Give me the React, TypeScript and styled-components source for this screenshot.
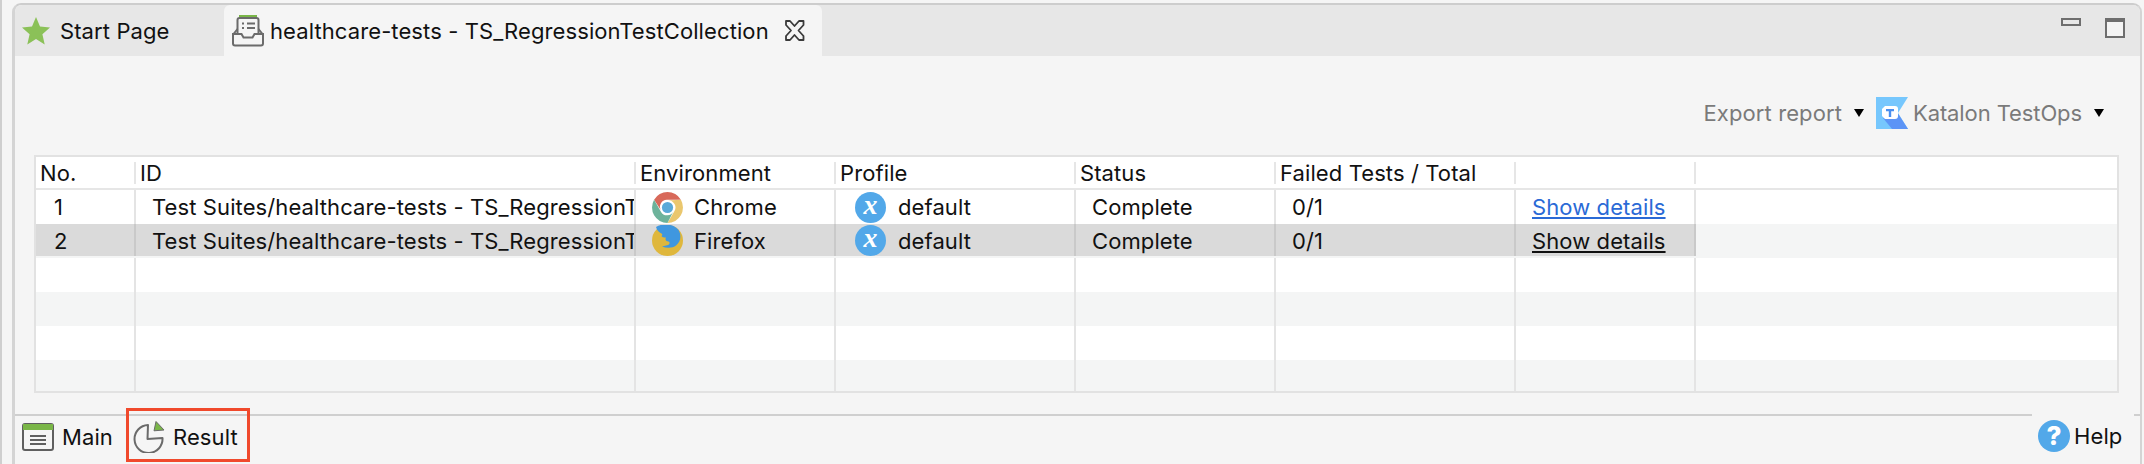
import React from "react";
import styled, { createGlobalStyle } from "styled-components";

const GlobalStyle = createGlobalStyle`
  html, body {
    margin: 0;
    padding: 0;
    background: #f5f5f5;
  }
  body {
    font-family: Inter, "Liberation Sans", sans-serif;
    font-size: 22px;
    letter-spacing: 0.1px;
    color: #111;
  }
`;

const columns = "100px 500px 200px 240px 200px 240px 180px 1fr";

const Page = styled.div`
  width: 2144px;
  height: 464px;
  box-sizing: border-box;
  overflow: hidden;
  padding: 3px 0 0 10px;
  background: #f5f5f5;
  border-left: 2px solid #cfcfcf;
`;

const Frame = styled.div`
  display: flex;
  flex-direction: column;
  height: 461px;
  width: 2130px;
  box-sizing: border-box;
  border-top: 2px solid #cdcdcd;
  border-left: 3px solid #d4d4d4;
  border-right: 2px solid #d4d4d4;
  border-radius: 9px 9px 0 0;
`;

const TabStrip = styled.div`
  display: flex;
  align-items: stretch;
  height: 51px;
  flex: none;
  background: #e7e7e7;
  border-radius: 7px 7px 0 0;
`;

const Tab = styled.div<{ $active?: boolean; $width: number; $pad: number }>`
  display: flex;
  align-items: center;
  width: ${(p) => p.$width}px;
  box-sizing: border-box;
  padding-left: ${(p) => p.$pad}px;
  background: ${(p) => (p.$active ? "#f5f5f5" : "transparent")};
  border-radius: 6px 6px 0 0;
  white-space: nowrap;
`;

const TabLabel = styled.span<{ $gap: number }>`
  margin-left: ${(p) => p.$gap}px;
`;

const CloseIcon = styled.svg`
  margin-left: 15px;
  flex: none;
`;

const WindowButtons = styled.div`
  display: flex;
  align-items: flex-start;
  gap: 24px;
  margin-left: auto;
  padding: 13px 15px 0 0;
`;

const Minimize = styled.div`
  width: 20px;
  height: 8px;
  box-sizing: border-box;
  border: 2px solid #6e6e6e;
`;

const Maximize = styled.div`
  width: 20px;
  height: 20px;
  box-sizing: border-box;
  border: 2px solid #6e6e6e;
  border-top-width: 4px;
  background: #f4f4f4;
`;

const Content = styled.div`
  flex: 1;
  display: flex;
  flex-direction: column;
  min-height: 0;
`;

const Toolbar = styled.div`
  display: flex;
  align-items: center;
  justify-content: flex-end;
  height: 99px;
  flex: none;
  box-sizing: border-box;
  padding: 14px 36px 0 0;
  color: #7a7a7a;
`;

const ToolLabel = styled.span`
  margin-left: 5px;
  letter-spacing: -0.1px;
`;

const Caret = styled.span<{ $gap: number; $after?: number }>`
  width: 0;
  height: 0;
  margin-left: ${(p) => p.$gap}px;
  margin-right: ${(p) => p.$after ?? 0}px;
  border-left: 5px solid transparent;
  border-right: 5px solid transparent;
  border-top: 8px solid #000;
`;

const Table = styled.div`
  margin: 0 21px 0 19px;
  height: 238px;
  flex: none;
  box-sizing: border-box;
  border: 2px solid #e2e2e2;
  background: #fff;
  overflow: hidden;
`;

const HeaderRow = styled.div`
  display: grid;
  grid-template-columns: ${columns};
  height: 31px;
  border-bottom: 2px solid #e6e6e6;
  align-items: center;
  background: #fff;
`;

const HeaderCell = styled.div`
  height: 22px;
  line-height: 22px;
  padding-left: 4px;
  border-right: 2px solid #e6e6e6;
  white-space: nowrap;
  &:last-child {
    border-right: none;
  }
`;

const Row = styled.div<{ $alt?: boolean }>`
  display: grid;
  grid-template-columns: ${columns};
  height: 34px;
  background: ${(p) => (p.$alt ? "#f4f5f5" : "#fff")};
`;

const Cell = styled.div<{ $selected?: boolean; $indent: number; $last?: boolean }>`
  display: flex;
  align-items: center;
  box-sizing: border-box;
  height: ${(p) => (p.$selected ? "32px" : "100%")};
  min-width: 0;
  overflow: hidden;
  white-space: nowrap;
  padding-left: ${(p) => p.$indent}px;
  padding-top: ${(p) => (p.$selected ? "1px" : "0")};
  background: ${(p) => (p.$selected ? "#dadada" : "transparent")};
  border-right: ${(p) =>
    p.$last ? "none" : p.$selected ? "2px solid #c9c9c9" : "2px solid #e4e4e4"};
`;

const RowIcon = styled.span`
  display: inline-flex;
  flex: none;
  margin-right: 11px;
`;

const VariableBadge = styled.span`
  display: inline-flex;
  align-items: center;
  justify-content: center;
  flex: none;
  width: 31px;
  height: 31px;
  margin-right: 12px;
  border-radius: 50%;
  background: #52a8e9;
  color: #fff;
  font-family: "Liberation Serif", serif;
  font-style: italic;
  font-weight: 700;
  font-size: 28px;
  line-height: 1;
  padding-bottom: 5px;
  box-sizing: border-box;
`;

const DetailLink = styled.a<{ $selected?: boolean }>`
  color: ${(p) => (p.$selected ? "#111" : "#2a6ad6")};
  text-decoration: underline;
`;

const BottomBar = styled.div`
  position: relative;
  display: flex;
  align-items: flex-start;
  height: 48px;
  flex: none;
  margin-top: 21px;
  border-top: 2px solid #cfcfcf;
  padding-left: 7px;
`;

const BottomTab = styled.div<{ $gap: number; $width: number }>`
  display: flex;
  align-items: center;
  height: 42px;
  width: ${(p) => p.$width}px;
  gap: ${(p) => p.$gap}px;
`;

/* red annotation drawn over the screenshot */
const Highlight = styled.div`
  position: absolute;
  left: 111px;
  top: -8px;
  width: 124px;
  height: 54px;
  box-sizing: border-box;
  border: 3px solid #f0492c;
`;

const HelpBox = styled.div`
  display: flex;
  align-items: center;
  gap: 4px;
  box-sizing: border-box;
  width: 102px;
  height: 44px;
  margin: -2px 6px 0 auto;
  padding-left: 6px;
  background: #f5f5f5;
`;

const HelpBadge = styled.span`
  display: inline-flex;
  align-items: center;
  justify-content: center;
  width: 32px;
  height: 32px;
  border-radius: 50%;
  background: #52a8e9;
  color: #fff;
  font-weight: 800;
  font-size: 26px;
  line-height: 1;
`;

const StarIcon = () => (
  <svg width="28" height="28" viewBox="0 0 28 28">
    <path d="M14 0l4 9.600 10 .9-7.600 6.700L22.700 27.500 14 22.100 5.300 27.500l2.300-10.300L0 10.500l10-.9z" fill="#8bc158" />
  </svg>
);

const InboxIcon = () => (
  <svg width="32" height="32" viewBox="0 0 32 32" fill="none">
    <rect x="7" y="0" width="18" height="3" fill="#7ab648" />
    <path d="M5.500 18V5q0-2 2-2h17q2 0 2 2v13" stroke="#6b6b6b" strokeWidth="2" fill="#f5f5f5" />
    <path d="M1.500 19l4-5M30.500 19l-4-5" stroke="#6b6b6b" strokeWidth="2" />
    <path d="M1 19h8.500l2 3.500h9l2-3.500H31v9.500a2 2 0 0 1-2 2H3a2 2 0 0 1-2-2z" stroke="#6b6b6b" strokeWidth="2" fill="#f5f5f5" />
    <path d="M10 8.500h2M15 8.500h8M10 13h2M15 13h8" stroke="#6b6b6b" strokeWidth="2" />
  </svg>
);

const TabCloseIcon = () => (
  <CloseIcon width="21" height="21" viewBox="0 0 21 21" fill="none">
    <path
      d="M2 1h4l4.500 5L15 1h4.500v4l-5 5.500 5 5.500v4H15l-4.500-5L6 20H2v-4l5-5.500-5-5.500z"
      stroke="#3a3a3a"
      strokeWidth="1.800"
      strokeLinejoin="round"
    />
  </CloseIcon>
);

const KatalonLogo = () => (
  <svg width="32" height="32" viewBox="0 0 32 32">
    <path d="M0 0h32L22 16 32 32H0z" fill="#76c7fd" />
    <path d="M7 21l15-4.500L32 32H16z" fill="#5c94f6" />
    <path d="M9 9h10a3 3 0 0 1 3 3v7a3 3 0 0 1-3 3H9l-3-3v-7z" fill="#fff" />
    <path d="M10 12h8v2.200h-2.800V20h-2.400v-5.800H10z" fill="#4a8ff0" />
  </svg>
);

const chromeSegment = "M2.100 7.750A15.500 15.500 0 0 1 28.900 7.750H15.500A7 7 0 0 0 9.440 19Z";

const ChromeIcon = () => (
  <svg width="31" height="31" viewBox="0 0 31 31">
    <path d={chromeSegment} fill="#d8695a" />
    <path d={chromeSegment} fill="#eac76e" transform="rotate(120 15.500 15.500)" />
    <path d={chromeSegment} fill="#6db39b" transform="rotate(240 15.500 15.500)" />
    <circle cx="15.500" cy="15.500" r="5.600" fill="#58a9d8" />
  </svg>
);

const FirefoxIcon = () => (
  <svg width="31" height="31" viewBox="0 0 31 31">
    <circle cx="15.500" cy="15.500" r="15.500" fill="#dfb73c" />
    <path d="M4 2q5-3 11-2.500c7 .5 12 4 13 9 1 5 0 9-4 12-3 2.500-9 3-14 1l6-1.500c2-1 2-3 .5-3.500-3-.5-3.500-2-2.500-4-2 0-4-.5-4.500-1.500 1-.5 1-2 0-2.500C8 8 5 6 4 2z" fill="#3f97df" />
  </svg>
);

const MainIcon = () => (
  <svg width="32" height="28" viewBox="0 0 32 28" fill="none">
    <rect x="1" y="1" width="30" height="26" rx="2" fill="#f5f5f5" stroke="#5f5f5f" strokeWidth="2" />
    <rect x="1" y="1" width="30" height="6" fill="#7ab648" />
    <path d="M8 13h16M8 17h16M8 21h16" stroke="#5f5f5f" strokeWidth="2" />
  </svg>
);

const ResultIcon = () => (
  <svg width="32" height="32" viewBox="0 0 32 32" fill="none">
    <path d="M15 4A14 14 0 1 0 29.500 17L14.500 18z" stroke="#6a6a6a" strokeWidth="2" strokeLinejoin="round" />
    <path d="M23 .5l8 8.500-10 .8z" fill="#7ab648" stroke="#6a6a6a" strokeWidth="1" />
  </svg>
);

type TestRun = {
  no: number;
  browser: "Chrome" | "Firefox";
  selected?: boolean;
};

const runs: TestRun[] = [
  { no: 1, browser: "Chrome" },
  { no: 2, browser: "Firefox", selected: true },
];

const headers = ["No.", "ID", "Environment", "Profile", "Status", "Failed Tests / Total", "", ""];
// the ID column is too narrow for the suite name, the table cuts it here
const suitePath = "Test Suites/healthcare-tests - TS_RegressionT";

const EmptyRow = ({ alt }: { alt?: boolean }) => (
  <Row $alt={alt}>
    {[0, 1, 2, 3, 4, 5, 6].map((i) => (
      <Cell key={i} $indent={4} />
    ))}
    <Cell $indent={0} $last />
  </Row>
);

const RunRow = ({ run, alt }: { run: TestRun; alt?: boolean }) => (
  <Row $alt={alt}>
    <Cell $selected={run.selected} $indent={18}>{run.no}</Cell>
    <Cell $selected={run.selected} $indent={16}>{suitePath}</Cell>
    <Cell $selected={run.selected} $indent={16}>
      <RowIcon>{run.browser === "Chrome" ? <ChromeIcon /> : <FirefoxIcon />}</RowIcon>
      {run.browser}
    </Cell>
    <Cell $selected={run.selected} $indent={19}>
      <VariableBadge>x</VariableBadge>
      default
    </Cell>
    <Cell $selected={run.selected} $indent={16}>Complete</Cell>
    <Cell $selected={run.selected} $indent={16}>0/1</Cell>
    <Cell $selected={run.selected} $indent={16}>
      <DetailLink $selected={run.selected}>Show details</DetailLink>
    </Cell>
    <Cell $indent={0} $last />
  </Row>
);

export default function App() {
  return (
    <>
      <GlobalStyle />
      <Page>
        <Frame>
          <TabStrip>
            <Tab $width={209} $pad={7}>
              <StarIcon />
              <TabLabel $gap={10}>Start Page</TabLabel>
            </Tab>
            <Tab $active $width={598} $pad={8}>
              <InboxIcon />
              <TabLabel $gap={6}>healthcare-tests - TS_RegressionTestCollection</TabLabel>
              <TabCloseIcon />
            </Tab>
            <WindowButtons>
              <Minimize />
              <Maximize />
            </WindowButtons>
          </TabStrip>
          <Content>
            <Toolbar>
              Export report
              <Caret $gap={12} $after={12} />
              <KatalonLogo />
              <ToolLabel>Katalon TestOps</ToolLabel>
              <Caret $gap={12} />
            </Toolbar>
            <Table>
              <HeaderRow>
                {headers.map((label, i) => (
                  <HeaderCell key={i}>{label}</HeaderCell>
                ))}
              </HeaderRow>
              {runs.map((run, i) => (
                <RunRow key={run.no} run={run} alt={i % 2 === 1} />
              ))}
              <EmptyRow />
              <EmptyRow alt />
              <EmptyRow />
              <EmptyRow alt />
            </Table>
            <BottomBar>
              <BottomTab $gap={8} $width={111}>
                <MainIcon />
                Main
              </BottomTab>
              <BottomTab $gap={8} $width={124}>
                <ResultIcon />
                Result
              </BottomTab>
              <Highlight />
              <HelpBox>
                <HelpBadge>?</HelpBadge>
                Help
              </HelpBox>
            </BottomBar>
          </Content>
        </Frame>
      </Page>
    </>
  );
}
